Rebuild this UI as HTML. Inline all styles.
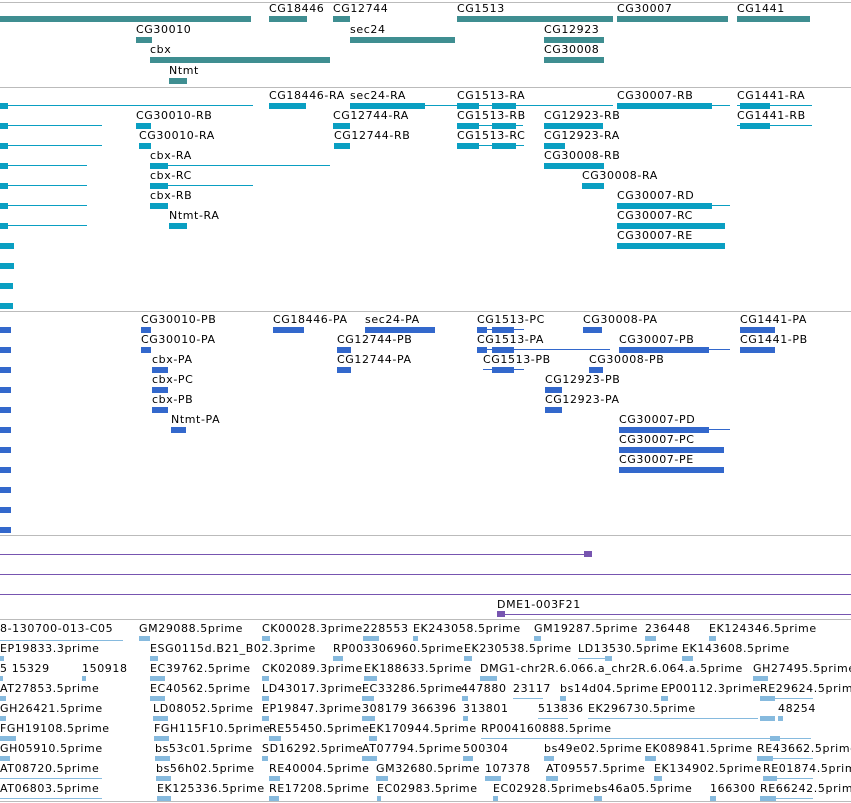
<!DOCTYPE html>
<html><head><meta charset="utf-8"><style>
body{margin:0;width:851px;height:803px;background:#fff;position:relative;overflow:hidden}
div{position:absolute}
.l{font:11px/12px "DejaVu Sans",sans-serif;letter-spacing:.6px;white-space:nowrap;color:#000;margin-top:1px}
.s{height:1px;background:#bbb;left:0;width:851px}
.t{background:#3f8e91;height:6px}
.c{background:#0a9fc2;height:6px}
.p{background:#3368cc;height:6px}
.e{background:#86bade;height:5px}
.cl{background:#0a9fc2;height:1px}
.pl{background:#3368cc;height:1px}
.el{background:#86bade;height:1px}
.v{background:#7755b0;height:1px}
</style></head><body>
<div class="s" style="top:2px"></div>
<div class="s" style="top:87px"></div>
<div class="s" style="top:311px"></div>
<div class="s" style="top:535px"></div>
<div class="s" style="top:619px"></div>
<div class="s" style="top:801px"></div>

<div class="t" style="left:0;top:16px;width:251px"></div>
<div class="l" style="left:269px;top:2px">CG18446</div><div class="t" style="left:269px;top:16px;width:38px"></div>
<div class="l" style="left:333px;top:2px">CG12744</div><div class="t" style="left:333px;top:16px;width:17px"></div>
<div class="l" style="left:457px;top:2px">CG1513</div><div class="t" style="left:457px;top:16px;width:156px"></div>
<div class="l" style="left:617px;top:2px">CG30007</div><div class="t" style="left:617px;top:16px;width:111px"></div>
<div class="l" style="left:737px;top:2px">CG1441</div><div class="t" style="left:737px;top:16px;width:73px"></div>
<div class="l" style="left:136px;top:23px">CG30010</div><div class="t" style="left:136px;top:37px;width:16px"></div>
<div class="l" style="left:350px;top:23px">sec24</div><div class="t" style="left:350px;top:37px;width:105px"></div>
<div class="l" style="left:544px;top:23px">CG12923</div><div class="t" style="left:544px;top:37px;width:60px"></div>
<div class="l" style="left:150px;top:43px">cbx</div><div class="t" style="left:150px;top:57px;width:180px"></div>
<div class="l" style="left:544px;top:43px">CG30008</div><div class="t" style="left:544px;top:57px;width:60px"></div>
<div class="l" style="left:169px;top:64px">Ntmt</div><div class="t" style="left:169px;top:78px;width:18px"></div>

<div class="cl" style="left:0;top:105px;width:253px"></div><div class="c" style="left:0;top:103px;width:8px"></div>
<div class="l" style="left:269px;top:89px">CG18446-RA</div><div class="c" style="left:269px;top:103px;width:37px"></div>
<div class="l" style="left:350px;top:89px">sec24-RA</div><div class="c" style="left:350px;top:103px;width:75px"></div>
<div class="l" style="left:457px;top:89px">CG1513-RA</div><div class="cl" style="left:425px;top:105px;width:188px"></div><div class="c" style="left:457px;top:103px;width:22px"></div><div class="c" style="left:492px;top:103px;width:24px"></div>
<div class="l" style="left:617px;top:89px">CG30007-RB</div><div class="cl" style="left:617px;top:105px;width:113px"></div><div class="c" style="left:617px;top:103px;width:95px"></div>
<div class="l" style="left:737px;top:89px">CG1441-RA</div><div class="cl" style="left:737px;top:105px;width:75px"></div><div class="c" style="left:740px;top:103px;width:30px"></div>

<div class="cl" style="left:0;top:125px;width:102px"></div><div class="c" style="left:0;top:123px;width:8px"></div>
<div class="l" style="left:136px;top:109px">CG30010-RB</div><div class="c" style="left:136px;top:123px;width:15px"></div>
<div class="l" style="left:333px;top:109px">CG12744-RA</div><div class="c" style="left:333px;top:123px;width:17px"></div>
<div class="l" style="left:457px;top:109px">CG1513-RB</div><div class="cl" style="left:457px;top:125px;width:66px"></div><div class="c" style="left:457px;top:123px;width:22px"></div><div class="c" style="left:492px;top:123px;width:24px"></div>
<div class="l" style="left:544px;top:109px">CG12923-RB</div><div class="c" style="left:544px;top:123px;width:59px"></div>
<div class="l" style="left:737px;top:109px">CG1441-RB</div><div class="cl" style="left:737px;top:125px;width:75px"></div><div class="c" style="left:740px;top:123px;width:30px"></div>

<div class="cl" style="left:0;top:145px;width:102px"></div><div class="c" style="left:0;top:143px;width:8px"></div>
<div class="l" style="left:139px;top:129px">CG30010-RA</div><div class="c" style="left:139px;top:143px;width:12px"></div>
<div class="l" style="left:334px;top:129px">CG12744-RB</div><div class="c" style="left:334px;top:143px;width:16px"></div>
<div class="l" style="left:457px;top:129px">CG1513-RC</div><div class="cl" style="left:457px;top:145px;width:67px"></div><div class="c" style="left:457px;top:143px;width:22px"></div><div class="c" style="left:492px;top:143px;width:24px"></div>
<div class="l" style="left:544px;top:129px">CG12923-RA</div><div class="c" style="left:544px;top:143px;width:21px"></div>

<div class="cl" style="left:0;top:165px;width:87px"></div><div class="c" style="left:0;top:163px;width:8px"></div>
<div class="l" style="left:150px;top:149px">cbx-RA</div><div class="cl" style="left:150px;top:165px;width:180px"></div><div class="c" style="left:150px;top:163px;width:18px"></div>
<div class="l" style="left:544px;top:149px">CG30008-RB</div><div class="c" style="left:544px;top:163px;width:60px"></div>

<div class="cl" style="left:0;top:185px;width:87px"></div><div class="c" style="left:0;top:183px;width:8px"></div>
<div class="l" style="left:150px;top:169px">cbx-RC</div><div class="cl" style="left:150px;top:185px;width:103px"></div><div class="c" style="left:150px;top:183px;width:18px"></div>
<div class="l" style="left:582px;top:169px">CG30008-RA</div><div class="c" style="left:582px;top:183px;width:22px"></div>

<div class="cl" style="left:0;top:205px;width:87px"></div><div class="c" style="left:0;top:203px;width:8px"></div>
<div class="l" style="left:150px;top:189px">cbx-RB</div><div class="c" style="left:150px;top:203px;width:18px"></div>
<div class="l" style="left:617px;top:189px">CG30007-RD</div><div class="cl" style="left:617px;top:205px;width:113px"></div><div class="c" style="left:617px;top:203px;width:95px"></div>

<div class="cl" style="left:0;top:225px;width:87px"></div><div class="c" style="left:0;top:223px;width:8px"></div>
<div class="l" style="left:169px;top:209px">Ntmt-RA</div><div class="c" style="left:169px;top:223px;width:18px"></div>
<div class="l" style="left:617px;top:209px">CG30007-RC</div><div class="c" style="left:617px;top:223px;width:108px"></div>
<div class="c" style="left:0;top:243px;width:14px"></div>
<div class="l" style="left:617px;top:229px">CG30007-RE</div><div class="c" style="left:617px;top:243px;width:108px"></div>
<div class="c" style="left:0;top:263px;width:14px"></div>
<div class="c" style="left:0;top:283px;width:13px"></div>
<div class="c" style="left:0;top:303px;width:13px"></div>

<div class="p" style="left:0;top:327px;width:11px"></div><div class="p" style="left:0;top:347px;width:11px"></div><div class="p" style="left:0;top:367px;width:11px"></div><div class="p" style="left:0;top:387px;width:11px"></div><div class="p" style="left:0;top:407px;width:11px"></div><div class="p" style="left:0;top:427px;width:11px"></div><div class="p" style="left:0;top:447px;width:11px"></div><div class="p" style="left:0;top:467px;width:11px"></div><div class="p" style="left:0;top:487px;width:11px"></div><div class="p" style="left:0;top:507px;width:11px"></div><div class="p" style="left:0;top:527px;width:11px"></div>
<div class="l" style="left:141px;top:313px">CG30010-PB</div><div class="p" style="left:141px;top:327px;width:10px"></div>
<div class="l" style="left:273px;top:313px">CG18446-PA</div><div class="p" style="left:273px;top:327px;width:31px"></div>
<div class="l" style="left:365px;top:313px">sec24-PA</div><div class="p" style="left:365px;top:327px;width:70px"></div>
<div class="l" style="left:477px;top:313px">CG1513-PC</div><div class="pl" style="left:477px;top:329px;width:47px"></div><div class="p" style="left:477px;top:327px;width:10px"></div><div class="p" style="left:492px;top:327px;width:22px"></div>
<div class="l" style="left:583px;top:313px">CG30008-PA</div><div class="p" style="left:583px;top:327px;width:19px"></div>
<div class="l" style="left:740px;top:313px">CG1441-PA</div><div class="p" style="left:740px;top:327px;width:35px"></div>
<div class="l" style="left:141px;top:333px">CG30010-PA</div><div class="p" style="left:141px;top:347px;width:10px"></div>
<div class="l" style="left:337px;top:333px">CG12744-PB</div><div class="p" style="left:337px;top:347px;width:14px"></div>
<div class="l" style="left:477px;top:333px">CG1513-PA</div><div class="pl" style="left:477px;top:349px;width:133px"></div><div class="p" style="left:477px;top:347px;width:10px"></div><div class="p" style="left:492px;top:347px;width:22px"></div>
<div class="l" style="left:619px;top:333px">CG30007-PB</div><div class="pl" style="left:619px;top:349px;width:111px"></div><div class="p" style="left:619px;top:347px;width:90px"></div>
<div class="l" style="left:740px;top:333px">CG1441-PB</div><div class="p" style="left:740px;top:347px;width:35px"></div>
<div class="l" style="left:152px;top:353px">cbx-PA</div><div class="p" style="left:152px;top:367px;width:16px"></div>
<div class="l" style="left:337px;top:353px">CG12744-PA</div><div class="p" style="left:337px;top:367px;width:14px"></div>
<div class="l" style="left:483px;top:353px">CG1513-PB</div><div class="pl" style="left:483px;top:369px;width:41px"></div><div class="p" style="left:492px;top:367px;width:22px"></div>
<div class="l" style="left:589px;top:353px">CG30008-PB</div><div class="p" style="left:589px;top:367px;width:14px"></div>
<div class="l" style="left:152px;top:373px">cbx-PC</div><div class="p" style="left:152px;top:387px;width:16px"></div>
<div class="l" style="left:545px;top:373px">CG12923-PB</div><div class="p" style="left:545px;top:387px;width:17px"></div>
<div class="l" style="left:152px;top:393px">cbx-PB</div><div class="p" style="left:152px;top:407px;width:16px"></div>
<div class="l" style="left:545px;top:393px">CG12923-PA</div><div class="p" style="left:545px;top:407px;width:17px"></div>
<div class="l" style="left:171px;top:413px">Ntmt-PA</div><div class="p" style="left:171px;top:427px;width:15px"></div>
<div class="l" style="left:619px;top:413px">CG30007-PD</div><div class="pl" style="left:619px;top:429px;width:111px"></div><div class="p" style="left:619px;top:427px;width:90px"></div>
<div class="l" style="left:619px;top:433px">CG30007-PC</div><div class="p" style="left:619px;top:447px;width:105px"></div>
<div class="l" style="left:619px;top:453px">CG30007-PE</div><div class="p" style="left:619px;top:467px;width:105px"></div>

<div class="v" style="left:0;top:554px;width:590px"></div><div style="left:584px;top:551px;width:8px;height:6px;background:#7755b0"></div>
<div class="v" style="left:0;top:574px;width:851px"></div>
<div class="v" style="left:0;top:594px;width:851px"></div>
<div class="l" style="left:497px;top:598px">DME1-003F21</div>
<div class="v" style="left:497px;top:614px;width:354px"></div><div style="left:497px;top:611px;width:8px;height:6px;background:#7755b0"></div>

<div class="l" style="left:0;top:622px">8-130700-013-C05</div><div class="el" style="left:0;top:640px;width:123px"></div>
<div class="l" style="left:139px;top:622px">GM29088.5prime</div><div class="e" style="left:139px;top:636px;width:11px"></div>
<div class="l" style="left:262px;top:622px">CK00028.3prime</div><div class="e" style="left:262px;top:636px;width:8px"></div>
<div class="l" style="left:363px;top:622px">228553</div><div class="e" style="left:363px;top:636px;width:16px"></div>
<div class="l" style="left:413px;top:622px">EK243058.5prime</div><div class="e" style="left:413px;top:636px;width:5px"></div>
<div class="l" style="left:534px;top:622px">GM19287.5prime</div><div class="e" style="left:534px;top:636px;width:7px"></div>
<div class="l" style="left:645px;top:622px">236448</div><div class="e" style="left:645px;top:636px;width:11px"></div>
<div class="l" style="left:709px;top:622px">EK124346.5prime</div><div class="e" style="left:709px;top:636px;width:7px"></div>

<div class="l" style="left:0;top:642px">EP19833.3prime</div><div class="e" style="left:0;top:656px;width:4px"></div>
<div class="l" style="left:150px;top:642px">ESG0115d.B21_B02.3prime</div><div class="e" style="left:150px;top:656px;width:8px"></div>
<div class="l" style="left:333px;top:642px">RP003306960.5prime</div><div class="e" style="left:333px;top:656px;width:10px"></div>
<div class="l" style="left:464px;top:642px">EK230538.5prime</div><div class="e" style="left:464px;top:656px;width:8px"></div>
<div class="l" style="left:578px;top:642px">LD13530.5prime</div><div class="el" style="left:578px;top:658px;width:34px"></div><div class="e" style="left:605px;top:656px;width:7px"></div>
<div class="l" style="left:682px;top:642px">EK143608.5prime</div><div class="e" style="left:682px;top:656px;width:11px"></div>

<div class="l" style="left:0;top:662px">5 15329</div><div class="e" style="left:0;top:676px;width:3px"></div>
<div class="l" style="left:82px;top:662px">150918</div><div class="e" style="left:82px;top:676px;width:4px"></div>
<div class="l" style="left:150px;top:662px">EC39762.5prime</div><div class="e" style="left:150px;top:676px;width:15px"></div>
<div class="l" style="left:262px;top:662px">CK02089.3prime</div><div class="e" style="left:262px;top:676px;width:7px"></div>
<div class="l" style="left:364px;top:662px">EK188633.5prime</div><div class="e" style="left:364px;top:676px;width:13px"></div>
<div class="l" style="left:480px;top:662px">DMG1-chr2R.6.066.a_chr2R.6.064.a.5prime</div><div class="e" style="left:480px;top:676px;width:17px"></div>
<div class="l" style="left:753px;top:662px">GH27495.5prime</div><div class="e" style="left:753px;top:676px;width:15px"></div>

<div class="l" style="left:0;top:682px">AT27853.5prime</div><div class="e" style="left:0;top:696px;width:6px"></div>
<div class="l" style="left:150px;top:682px">EC40562.5prime</div><div class="e" style="left:150px;top:696px;width:15px"></div>
<div class="l" style="left:262px;top:682px">LD43017.3prime</div><div class="e" style="left:262px;top:696px;width:7px"></div>
<div class="l" style="left:362px;top:682px">EC33286.5prime</div><div class="e" style="left:362px;top:696px;width:12px"></div>
<div class="l" style="left:461px;top:682px">447880</div><div class="e" style="left:462px;top:696px;width:6px"></div>
<div class="l" style="left:513px;top:682px">23117</div><div class="el" style="left:513px;top:698px;width:30px"></div>
<div class="l" style="left:560px;top:682px">bs14d04.5prime</div><div class="e" style="left:560px;top:696px;width:6px"></div>
<div class="l" style="left:661px;top:682px">EP00112.3prime</div><div class="e" style="left:661px;top:696px;width:7px"></div>
<div class="l" style="left:760px;top:682px">RE29624.5prime</div><div class="el" style="left:760px;top:698px;width:53px"></div><div class="e" style="left:760px;top:696px;width:15px"></div>

<div class="l" style="left:0;top:702px">GH26421.5prime</div><div class="e" style="left:0;top:716px;width:6px"></div>
<div class="l" style="left:153px;top:702px">LD08052.5prime</div><div class="e" style="left:153px;top:716px;width:15px"></div>
<div class="l" style="left:262px;top:702px">EP19847.3prime</div><div class="e" style="left:262px;top:716px;width:7px"></div>
<div class="l" style="left:362px;top:702px">308179</div><div class="e" style="left:362px;top:716px;width:13px"></div>
<div class="l" style="left:411px;top:702px">366396</div>
<div class="l" style="left:463px;top:702px">313801</div><div class="e" style="left:463px;top:716px;width:5px"></div>
<div class="l" style="left:538px;top:702px">513836</div><div class="el" style="left:538px;top:718px;width:30px"></div>
<div class="l" style="left:588px;top:702px">EK296730.5prime</div><div class="el" style="left:588px;top:718px;width:170px"></div><div class="e" style="left:760px;top:716px;width:15px"></div>
<div class="l" style="left:778px;top:702px">48254</div><div class="e" style="left:778px;top:716px;width:5px"></div>

<div class="l" style="left:0;top:722px">FGH19108.5prime</div><div class="e" style="left:0;top:736px;width:16px"></div>
<div class="l" style="left:154px;top:722px">FGH115F10.5prime</div><div class="e" style="left:154px;top:736px;width:15px"></div>
<div class="l" style="left:269px;top:722px">RE55450.5prime</div><div class="e" style="left:269px;top:736px;width:12px"></div>
<div class="l" style="left:369px;top:722px">EK170944.5prime</div><div class="e" style="left:369px;top:736px;width:8px"></div>
<div class="l" style="left:481px;top:722px">RP004160888.5prime</div><div class="el" style="left:481px;top:738px;width:330px"></div><div class="e" style="left:770px;top:736px;width:10px"></div>

<div class="l" style="left:0;top:742px">GH05910.5prime</div><div class="e" style="left:0;top:756px;width:10px"></div>
<div class="l" style="left:155px;top:742px">bs53c01.5prime</div><div class="e" style="left:155px;top:756px;width:15px"></div>
<div class="l" style="left:262px;top:742px">SD16292.5prime</div><div class="e" style="left:262px;top:756px;width:6px"></div>
<div class="l" style="left:362px;top:742px">AT07794.5prime</div><div class="e" style="left:362px;top:756px;width:15px"></div>
<div class="l" style="left:463px;top:742px">500304</div><div class="e" style="left:463px;top:756px;width:10px"></div>
<div class="l" style="left:544px;top:742px">bs49e02.5prime</div><div class="e" style="left:544px;top:756px;width:10px"></div>
<div class="l" style="left:645px;top:742px">EK089841.5prime</div><div class="e" style="left:645px;top:756px;width:11px"></div>
<div class="l" style="left:757px;top:742px">RE43662.5prime</div><div class="el" style="left:757px;top:758px;width:56px"></div><div class="e" style="left:757px;top:756px;width:16px"></div>

<div class="l" style="left:0;top:762px">AT08720.5prime</div><div class="el" style="left:0;top:778px;width:102px"></div>
<div class="l" style="left:156px;top:762px">bs56h02.5prime</div><div class="e" style="left:156px;top:776px;width:15px"></div>
<div class="l" style="left:269px;top:762px">RE40004.5prime</div><div class="e" style="left:269px;top:776px;width:11px"></div>
<div class="l" style="left:376px;top:762px">GM32680.5prime</div><div class="e" style="left:376px;top:776px;width:12px"></div>
<div class="l" style="left:485px;top:762px">107378</div><div class="e" style="left:485px;top:776px;width:16px"></div>
<div class="l" style="left:546px;top:762px">AT09557.5prime</div><div class="e" style="left:546px;top:776px;width:12px"></div>
<div class="l" style="left:654px;top:762px">EK134902.5prime</div><div class="e" style="left:654px;top:776px;width:8px"></div>
<div class="l" style="left:763px;top:762px">RE01874.5prime</div><div class="el" style="left:763px;top:778px;width:50px"></div><div class="e" style="left:763px;top:776px;width:14px"></div>

<div class="l" style="left:0;top:782px">AT06803.5prime</div><div class="el" style="left:0;top:798px;width:102px"></div>
<div class="l" style="left:157px;top:782px">EK125336.5prime</div><div class="e" style="left:157px;top:796px;width:14px"></div>
<div class="l" style="left:269px;top:782px">RE17208.5prime</div><div class="e" style="left:269px;top:796px;width:10px"></div>
<div class="l" style="left:377px;top:782px">EC02983.5prime</div><div class="e" style="left:377px;top:796px;width:4px"></div>
<div class="l" style="left:493px;top:782px">EC02928.5prime</div><div class="e" style="left:493px;top:796px;width:5px"></div>
<div class="l" style="left:594px;top:782px">bs46a05.5prime</div><div class="e" style="left:594px;top:796px;width:8px"></div>
<div class="l" style="left:710px;top:782px">166300</div><div class="e" style="left:710px;top:796px;width:6px"></div>
<div class="l" style="left:760px;top:782px">RE66242.5prime</div><div class="el" style="left:760px;top:798px;width:53px"></div><div class="e" style="left:760px;top:796px;width:16px"></div>
</body></html>
